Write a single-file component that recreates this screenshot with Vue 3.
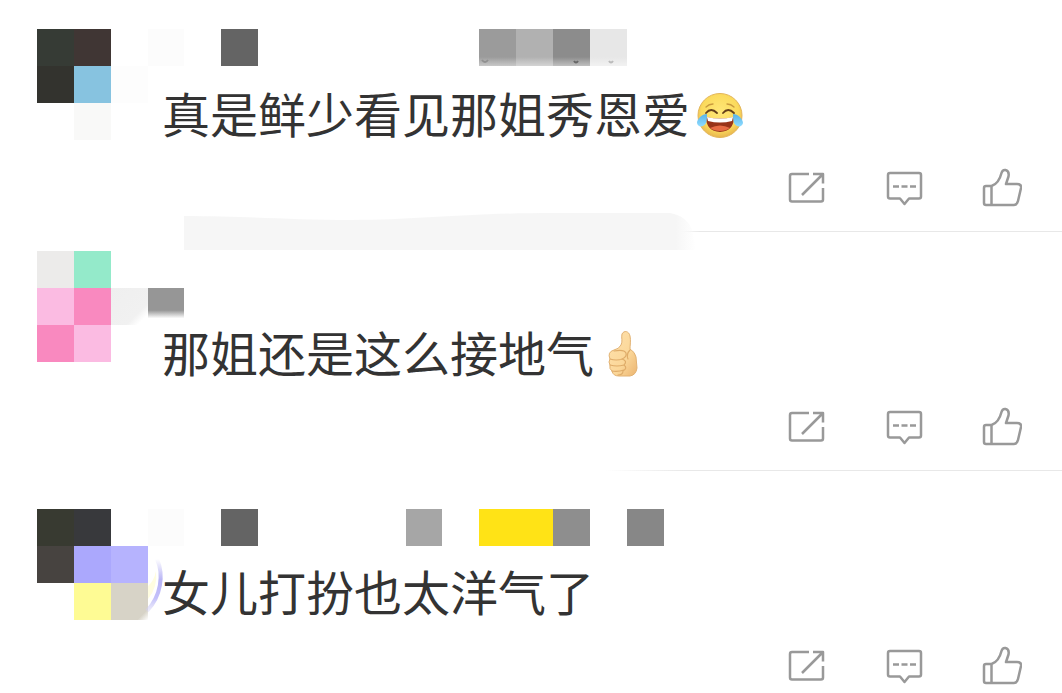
<script setup>
const CELL = 36.86

// Each tile: [column, row, columns wide, colour]
const comments = [
  {
    text: '真是鲜少看见那姐秀恩爱',
    emoji: 'joy',
    tiles: [
      [0, 0, 1, '#363b35'], [1, 0, 1, '#403634'], [3, 0, 1, '#fcfcfc'], [5, 0, 1, '#646464'],
      [0, 1, 1, '#33332e'], [1, 1, 1, '#87c3e0'], [2, 1, 1, '#fdfdfd'], [1, 2, 1, '#f9f9f8'],
      [12, 0, 1, '#9b9b9b'], [13, 0, 1, '#b1b1b1'], [14, 0, 1, '#8c8c8c'], [15, 0, 1, '#e7e7e7']
    ]
  },
  {
    text: '那姐还是这么接地气',
    emoji: 'thumb',
    tiles: [
      [0, 0, 1, '#ecebea'], [1, 0, 1, '#94eaca'],
      [0, 1, 1, '#fbbbe2'], [1, 1, 1, '#f989bf'],
      [0, 2, 1, '#f989bf'], [1, 2, 1, '#fbbbe2']
    ]
  },
  {
    text: '女儿打扮也太洋气了',
    emoji: '',
    tiles: [
      [0, 0, 1, '#383a31'], [1, 0, 1, '#38393c'], [3, 0, 1, '#fcfcfc'], [5, 0, 1, '#646464'],
      [10, 0, 1, '#a6a6a6'], [12, 0, 2, '#ffe316'], [14, 0, 1, '#8e8e8e'], [16, 0, 1, '#878787'],
      [0, 1, 1, '#474340'], [1, 1, 1, '#aba8fd'], [2, 1, 1, '#b6b3fe'],
      [1, 2, 1, '#fefb94']
    ]
  }
]
</script>

<template>
  <main class="feed">
    <article v-for="(c, i) in comments" :key="i" class="comment" :class="'comment-' + (i + 1)">
      <svg class="mosaic" width="700" height="240" viewBox="0 0 700 240" aria-hidden="true">
        <defs>
          <linearGradient id="fadeDown" x1="0" y1="0" x2="0" y2="1">
            <stop offset="0" stop-color="#fff" stop-opacity="0" />
            <stop offset="1" stop-color="#fff" stop-opacity=".45" />
          </linearGradient>
          <linearGradient id="nameTile" x1="0" y1="0" x2="0" y2="1">
            <stop offset="0" stop-color="#969696" />
            <stop offset=".6" stop-color="#969696" />
            <stop offset=".82" stop-color="#fff" />
          </linearGradient>
          <linearGradient id="cornerTile" x1="0" y1="0" x2="1" y2="1">
            <stop offset="0" stop-color="#efefef" />
            <stop offset=".7" stop-color="#f1f1f1" />
            <stop offset=".86" stop-color="#fff" />
          </linearGradient>
          <linearGradient id="sandTile" x1="0" y1="0" x2="1" y2="1">
            <stop offset="0" stop-color="#d7d3c7" />
            <stop offset=".85" stop-color="#d7d3c7" />
            <stop offset="1" stop-color="#fff" />
          </linearGradient>
          <linearGradient id="ring" x1="0" y1="0" x2="0" y2="1">
            <stop offset="0" stop-color="#b9b5f5" stop-opacity="0" />
            <stop offset=".4" stop-color="#b9b5f5" />
            <stop offset=".75" stop-color="#c3c0fa" />
            <stop offset="1" stop-color="#d3d0f5" stop-opacity=".4" />
          </linearGradient>
          <linearGradient id="bandEnd">
            <stop offset="0" stop-color="#f6f6f6" />
            <stop offset=".96" stop-color="#f6f6f6" />
            <stop offset="1" stop-color="#f6f6f6" stop-opacity="0" />
          </linearGradient>
        </defs>
        <g shape-rendering="crispEdges">
          <rect
            v-for="(t, n) in c.tiles" :key="n"
            :x="t[0] * CELL" :y="t[1] * CELL" :width="t[2] * CELL" :height="CELL" :fill="t[3]"
          />
        </g>
        <template v-if="i === 0">
          <rect x="442" y="28" width="149" height="9" fill="url(#fadeDown)" />
          <g fill="none" stroke-width="2">
            <path d="M445 31q3 4 6 0" stroke="#909090" />
            <path d="M537 32q2 3 4 0" stroke="#666" />
            <path d="M572 32q2 3 4 0" stroke="#bbb" />
          </g>
          <path d="M147 187C210 187 250 191 315 191S430 184 515 184H633Q650 187 655 201L659 221H147Z" fill="url(#bandEnd)" />
        </template>
        <template v-if="i === 1">
          <rect x="74" y="37" width="37" height="37" fill="url(#cornerTile)" />
          <rect x="111" y="37" width="36" height="37" fill="url(#nameTile)" />
        </template>
        <template v-if="i === 2">
          <rect x="74" y="74" width="37" height="37" fill="url(#sandTile)" />
          <path d="M119 62Q121 78 111 90V77Q117 72 119 62Z" fill="#fffde0" />
          <path d="M120 50C127 66 124 87 110 102" fill="none" stroke="url(#ring)" stroke-width="4" />
        </template>
      </svg>

      <p class="body">
        <span class="text">{{ c.text }}</span>
        <svg v-if="c.emoji === 'joy'" class="emoji" viewBox="0 0 48 48" role="img" aria-label="笑哭">
          <defs>
            <radialGradient id="face" cx=".5" cy=".42" r=".56">
              <stop offset="0" stop-color="#ffe777" />
              <stop offset=".75" stop-color="#fbda5c" />
              <stop offset="1" stop-color="#eaba50" />
            </radialGradient>
            <linearGradient id="tear" x1="0" y1="0" x2="0" y2="1">
              <stop offset="0" stop-color="#58b2e8" />
              <stop offset="1" stop-color="#8fdcff" />
            </linearGradient>
          </defs>
          <circle cx="24" cy="23.500" r="22" fill="url(#face)" stroke="#e3b558" />
          <path d="M10 15q3-3 7-3M31 12q4 0 7 3" fill="none" stroke="#c99a3d" stroke-width="1.300" stroke-linecap="round" />
          <path d="M10 21q5-6 11 0M27 21q5-6 11 0" fill="none" stroke="#654019" stroke-width="1.800" stroke-linecap="round" />
          <path d="M10 25Q24 28 38 25Q38 39 24 40Q10 39 10 25Z" fill="#983419" />
          <path d="M11 25Q24 28 37 25L36 29Q24 32 12 29Z" fill="#fff" />
          <path d="M14 36Q24 31 34 36Q30 39 24 39T14 36Z" fill="#e66b43" />
          <path d="M11 22C6 22 1 27 1 31C2 36 8 35 10 31C11 28 11 25 11 22ZM37 22C42 22 47 27 47 31C46 36 40 35 38 31C37 28 37 25 37 22Z" fill="url(#tear)" />
        </svg>
        <svg v-if="c.emoji === 'thumb'" class="emoji" viewBox="0 0 48 48" role="img" aria-label="赞">
          <defs>
            <linearGradient id="skin" x1="0" y1="0" x2="1" y2="1">
              <stop offset="0" stop-color="#ffe2ae" />
              <stop offset=".6" stop-color="#fbd799" />
              <stop offset="1" stop-color="#ebb470" />
            </linearGradient>
          </defs>
          <path d="M22 3C24-1 29 0 30 5C31 9 30 15 30 18Q35 21 36 26L37 37Q36 44 30 45H19Q13 45 12 40Q9 38 10 34Q8 31 10 28Q7 21 14 19Q19 18 21 14C23 10 21 7 22 3Z" fill="url(#skin)" stroke="#e2b273" />
          <path d="M10 28Q16 30 23 28M10 34Q17 36 24 34M12 40Q18 41 24 39M14 20Q24 18 26 22Q27 26 22 28Q28 30 24 34Q28 37 23 40Q23 44 18 44M30 19Q26 23 28 28" fill="none" stroke="#dfac69" stroke-width="1.200" stroke-linecap="round" />
        </svg>
      </p>

      <div class="actions">
        <button type="button" aria-label="转发">
          <svg viewBox="0 0 40 40">
            <path d="M23 6H6Q4 6 4 8V31.500Q4 33.500 6 33.500H35Q37 33.500 37 31.500V20M27 6H37V15.500M36 7L16 27" />
          </svg>
        </button>
        <button type="button" aria-label="评论">
          <svg viewBox="0 0 40 40">
            <path d="M6 5H35Q37 5 37 7V28.500Q37 30.500 35 30.500H25L20.500 36L16 30.500H6Q4 30.500 4 28.500V7Q4 5 6 5Z" />
            <path d="M9 18.500H15M17.500 18.500H23.500M26 18.500H32" />
          </svg>
        </button>
        <button type="button" aria-label="点赞">
          <svg viewBox="0 0 40 40">
            <path d="M9.500 18C16 16 18 11 19.500 5Q20.500 1.500 23.500 2Q27.500 3 26.500 8.500L24 16H35Q39.500 16 39 20L36 33Q35 37 32 37H4Q2 37 2 35V20Q2 18 4 18H9.500V37" />
          </svg>
        </button>
      </div>
      <hr v-if="i < 2" class="divider">
    </article>
  </main>
</template>

<style scoped>
.feed {
  width: 100%;
  overflow: hidden;
  background: #fff;
  color: #333;
  font-family: "Noto Sans CJK SC", sans-serif;
}
.comment {
  position: relative;
  padding-top: 99px;
}
.comment-1 {
  padding-top: 92px;
}
.mosaic {
  position: absolute;
  left: 37px;
  top: 38px;
  pointer-events: none;
}
.comment-1 .mosaic {
  top: 29px;
}
.comment-2 .mosaic {
  top: 19px;
}
.body {
  position: relative;
  display: flex;
  align-items: flex-start;
  gap: 6px;
  min-height: 48px;
  margin: 0;
  padding: 0 40px 0 162px;
  font-size: 48px;
}
.text {
  line-height: 40px;
}
.emoji {
  flex: none;
  width: 48px;
  height: 48px;
}
.actions {
  display: flex;
  justify-content: flex-end;
  gap: 58px;
  padding: 28px 40px 23px;
}
.comment-3 .actions {
  padding-bottom: 7px;
}
button {
  width: 40px;
  height: 40px;
  padding: 0;
  border: 0;
  background: none;
  cursor: pointer;
}
button svg {
  display: block;
  width: 40px;
  height: 40px;
  fill: none;
  stroke: #999;
  stroke-width: 2.5;
  stroke-linejoin: round;
}
.divider {
  height: 1px;
  margin: 0 0 0 680px;
  border: 0;
  background: linear-gradient(to right, #fff, #e8e8e8 20px);
}
.comment-2 .divider {
  margin-left: 605px;
  background: linear-gradient(to right, #fff, #e8e8e8 80px);
}
</style>

<style>
body {
  background: #fff;
}
</style>
